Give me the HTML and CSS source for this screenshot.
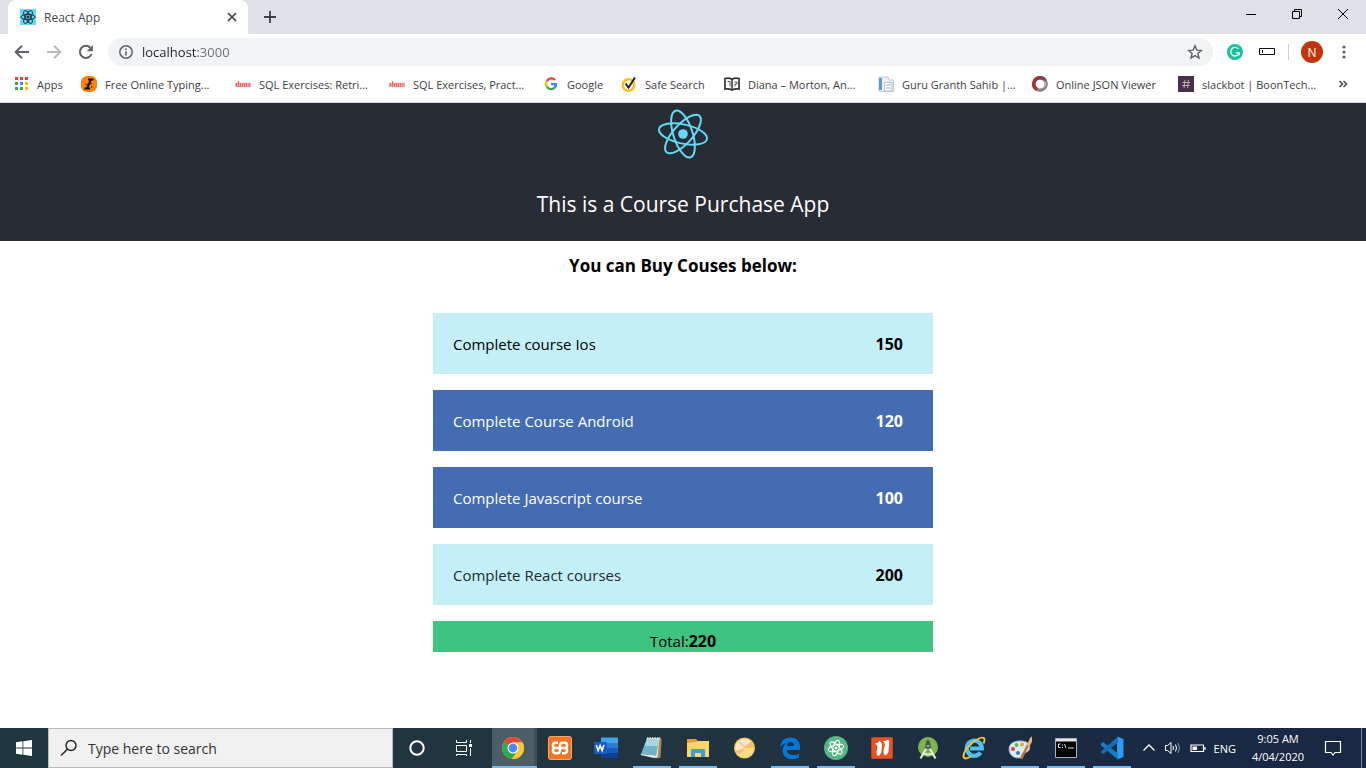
FILE: index.html
```html
<!DOCTYPE html>
<html lang="en">
<head>
<meta charset="utf-8">
<title>React App</title>
<link rel="stylesheet" href="styles.css">
</head>
<body>
<div class="screen">
  <div class="tab-strip">
    <div class="tab">
      <svg class="icon16" viewBox="0 0 16 16"><rect width="16" height="16" fill="#61dafb"/><g fill="none" stroke="#20303a" stroke-width="1"><ellipse cx="8" cy="8" rx="7" ry="2.7"/><ellipse cx="8" cy="8" rx="7" ry="2.7" transform="rotate(60 8 8)"/><ellipse cx="8" cy="8" rx="7" ry="2.7" transform="rotate(120 8 8)"/></g><circle cx="8" cy="8" r="1.5" fill="#20303a"/></svg>
      <span class="tab-title">React App</span>
      <button class="plain" aria-label="Close tab"><svg width="16" height="16" viewBox="0 0 16 16"><path d="M4 4l8 8M12 4l-8 8" stroke="#3c4043" stroke-width="1.700"/></svg></button>
    </div>
    <button class="plain new-tab" aria-label="New tab"><svg width="16" height="16" viewBox="0 0 16 16"><path d="M8 2v12M2 8h12" stroke="#3c4043" stroke-width="1.800"/></svg></button>
    <div class="window-buttons">
      <button class="plain" aria-label="Minimise"><svg width="12" height="12" viewBox="0 0 12 12"><path d="M1 6.500h10" stroke="#000"/></svg></button>
      <button class="plain" aria-label="Restore"><svg width="12" height="12" viewBox="0 0 12 12"><path d="M1.500 3.500h7v7h-7zM3.500 3.500v-2h7v7h-2" fill="none" stroke="#000"/></svg></button>
      <button class="plain" aria-label="Close"><svg width="12" height="12" viewBox="0 0 12 12"><path d="M1 1l10 10M11 1L1 11" stroke="#000"/></svg></button>
    </div>
  </div>

  <div class="toolbar">
    <button class="plain" aria-label="Back"><svg class="icon16" viewBox="0 0 16 16"><path d="M15 8H2M8 1.700L1.700 8 8 14.300" fill="none" stroke="#5f6368" stroke-width="2"/></svg></button>
    <button class="plain" aria-label="Forward"><svg class="icon16" viewBox="0 0 16 16"><path d="M1 8h13M8 1.700L14.300 8 8 14.300" fill="none" stroke="#babcbe" stroke-width="2"/></svg></button>
    <button class="plain" aria-label="Reload"><svg class="icon16" viewBox="0 0 16 16"><path d="M13.500 10A6 6 0 1 1 12.300 3.800" fill="none" stroke="#5f6368" stroke-width="2"/><path d="M14.900 1v6.200H8.700z" fill="#5f6368"/></svg></button>
    <div class="address">
      <svg class="icon16" viewBox="0 0 16 16"><circle cx="8" cy="8" r="6.200" fill="none" stroke="#5f6368" stroke-width="1.500"/><path d="M8 7.200v4.200M8 4.400v1.600" stroke="#5f6368" stroke-width="1.600"/></svg>
      <input class="url" type="text" aria-label="Address" value="localhost:3000">
      <button class="plain" aria-label="Bookmark this page"><svg class="icon16" viewBox="0 0 16 16"><path d="M8 1.900l1.800 4.200 4.600.4-3.500 3 1.100 4.500-4-2.400-4 2.400 1.100-4.500-3.500-3 4.600-.4z" fill="none" stroke="#5f6368" stroke-width="1.400"/></svg></button>
    </div>
    <button class="plain" aria-label="Grammarly"><svg class="icon16" viewBox="0 0 16 16"><circle cx="8" cy="8" r="8" fill="#15c39a"/><path d="M11.300 4.900A4.300 4.300 0 1 0 12.200 8.800H8.800M12.200 8.500v2.700" fill="none" stroke="#fff" stroke-width="1.300"/></svg></button>
    <button class="plain" aria-label="Extension"><svg class="icon16" viewBox="0 0 16 16"><path d="M.5 4.500h15v6H.5zM3.500 6v3" fill="none" stroke="#111"/></svg></button>
    <span class="divider"></span>
    <button class="plain avatar">N</button>
    <button class="plain" aria-label="Menu"><svg class="icon16" viewBox="0 0 16 16" fill="#5f6368"><circle cx="8" cy="3" r="1.600"/><circle cx="8" cy="8" r="1.600"/><circle cx="8" cy="13" r="1.600"/></svg></button>
  </div>

  <nav class="bookmarks" aria-label="Bookmarks">
    <a href="#"><svg class="icon16" viewBox="0 0 16 16"><path fill="#ea4335" d="M2 1h3v3H2zM7 1h3v3H7zM12 1h3v3h-3z"/><path fill="#34a853" d="M2 6h3v3H2zM2 11h3v3H2z"/><path fill="#4285f4" d="M7 6h3v3H7z"/><path fill="#34a853" d="M7 11h3v3H7z"/><path fill="#fbbc05" d="M12 6h3v3h-3zM12 11h3v3h-3z"/></svg>Apps</a>
    <a href="#"><svg class="icon16" viewBox="0 0 16 16"><rect width="16" height="16" rx="6" fill="#f9820f"/><path d="M7 3.500h5.500M3.500 12.500H9M10 3.500l-4 9" stroke="#111" stroke-width="1.900"/><path d="M4.500 8.500l6.500-1M11 10l-1 2" stroke="#111" stroke-width=".8"/></svg>Free Online Typing...</a>
    <a href="#"><svg class="icon16" viewBox="0 0 16 16"><path d="M0 9h16" stroke="#f7b0b2" stroke-width="4.500"/><path d="M1.500 7v3.500M3.500 5v6M5.500 7v4M7.500 7v4M9.500 7v4M11.500 7v4M14 7v4" stroke="#ee6066"/></svg>SQL Exercises: Retri...</a>
    <a href="#"><svg class="icon16" viewBox="0 0 16 16"><path d="M0 9h16" stroke="#f7b0b2" stroke-width="4.500"/><path d="M1.500 7v3.500M3.500 5v6M5.500 7v4M7.500 7v4M9.500 7v4M11.500 7v4M14 7v4" stroke="#ee6066"/></svg>SQL Exercises, Pract...</a>
    <a href="#"><svg class="icon16" viewBox="0 0 16 16" fill="none" stroke-width="2.300"><path d="M12.100 4A5 5 0 0 0 3.800 5.300" stroke="#ea4335"/><path d="M3.800 5.300a5 5 0 0 0 0 5.400" stroke="#fbbc05"/><path d="M3.800 10.700a5 5 0 0 0 7.600 1.200" stroke="#34a853"/><path d="M11.400 11.900A5 5 0 0 0 13 8.200H8" stroke="#4285f4"/></svg>Google</a>
    <a href="#"><svg class="icon16" viewBox="0 0 16 16"><circle cx="7.500" cy="9" r="5.700" fill="#fff" stroke="#fdc010" stroke-width="2.500"/><path d="M4.500 7.500l3 4L14 1.500" fill="none" stroke="#222" stroke-width="2"/></svg>Safe Search</a>
    <a href="#"><svg class="icon16" viewBox="0 0 16 16"><path d="M1 2.500q4-1 7 .8 3-1.800 7-.8V13q-4-.7-7 1-3-1.700-7-1z" fill="#fff" stroke="#333" stroke-width="1.700"/><path d="M8 3.500v10" stroke="#333" stroke-width="1.500"/><path d="M3.500 5.500H6v5M10.500 6H13v2h-2v2.500" fill="none" stroke="#555"/></svg>Diana – Morton, An...</a>
    <a href="#"><svg class="icon16" viewBox="0 0 16 16"><path d="M1 1h9l1 3h4.500v11.500H1z" fill="#eef1f4" stroke="#c3c9d1"/><path d="M1 2h3v12H1z" fill="#5c9ccc"/><path d="M6.500 6.500H14V15H6.500z" fill="#fff" stroke="#b7bec8"/><path d="M8 9h5M8 12h5" stroke="#a8b2bf"/></svg>Guru Granth Sahib |...</a>
    <a href="#"><svg class="icon16" viewBox="0 0 16 16" fill="none" stroke-width="3.400"><circle cx="8" cy="8" r="6.200" stroke="#8d8788"/><path d="M5 13.400A6.200 6.200 0 0 1 8 1.800" stroke="#b02a36"/><path d="M8 1.800a6.200 6.200 0 0 1 5.400 3.200" stroke="#74484c"/><path d="M11.500 4a5 5 0 0 1 0 8" stroke="#c6c2c2" stroke-width="1"/></svg>Online JSON Viewer</a>
    <a href="#"><svg class="icon16" viewBox="0 0 16 16"><rect width="16" height="16" fill="#4a2f48"/><path d="M7 4L6 12M10.500 4l-1 8M4.500 6.500h7.500M4 9.500h7.500" stroke="#b9aab8"/></svg>slackbot | BoonTech...</a>
    <button class="plain" aria-label="More bookmarks"><svg width="10" height="10" viewBox="0 0 10 10"><path d="M1.500 2l3 3-3 3M5.500 2l3 3-3 3" fill="none" stroke="#4a4d51" stroke-width="1.600"/></svg></button>
  </nav>

  <header class="app-header">
    <svg class="app-logo" viewBox="0 0 52 52"><g fill="none" stroke="#61dafb" stroke-width="2"><ellipse cx="26" cy="26" rx="24.500" ry="9.600" transform="rotate(12 26 26)"/><ellipse cx="26" cy="26" rx="24.500" ry="9.600" transform="rotate(72 26 26)"/><ellipse cx="26" cy="26" rx="24.500" ry="9.600" transform="rotate(132 26 26)"/></g><circle cx="26" cy="26" r="4.800" fill="#61dafb"/></svg>
    <h1>This is a Course Purchase App</h1>
  </header>

  <main class="app-main">
    <h2>You can Buy Couses below:</h2>
    <ul class="courses">
      <li class="course"><span>Complete course Ios</span><b>150</b></li>
      <li class="course selected"><span>Complete Course Android</span><b>120</b></li>
      <li class="course selected"><span>Complete Javascript course</span><b>100</b></li>
      <li class="course faded"><span>Complete React courses</span><b>200</b></li>
    </ul>
    <p class="total">Total:<b>220</b></p>
  </main>

  <footer class="taskbar">
    <button class="plain start" aria-label="Start"><svg width="16" height="16" viewBox="0 0 16 16"><path fill="#fff" d="M0 2.200l6.500-.9v6.200H0zM7.300 1.200L16 0v7.500H7.300zM0 8.400h6.500v6.300L0 13.800zM7.300 8.400H16V16l-8.700-1.200z"/></svg></button>
    <label class="search"><svg width="18" height="18" viewBox="0 0 18 18"><circle cx="11" cy="6.500" r="5" fill="none" stroke="#222" stroke-width="1.400"/><path d="M7.400 10.200L1 16.500" stroke="#222" stroke-width="1.500"/></svg><input type="text" aria-label="Search" placeholder="Type here to search"></label>
    <button class="plain task" aria-label="Cortana"><svg width="18" height="18" viewBox="0 0 18 18"><circle cx="9" cy="9" r="6.700" fill="none" stroke="#fff" stroke-width="2"/></svg></button>
    <button class="plain task" aria-label="Task view"><svg width="18" height="18" viewBox="0 0 18 18"><path d="M2.500 1v2.500h10V1M2.500 6.500h10v6h-10zM2.500 17v-1.500h10V17M16.500 1v3M16.500 9v8" fill="none" stroke="#fff"/><path d="M15 5h3v3h-3z" fill="#fff"/></svg></button>
    <button class="plain task running active" aria-label="Chrome"><svg class="icon24" viewBox="0 0 24 24"><circle cx="12" cy="12" r="11" fill="#fcc934"/><path d="M12 12L2.500 6.500A11 11 0 0 1 21.500 6.500H12z" fill="#dd4b3e"/><path d="M12 12L2.500 6.500A11 11 0 0 0 11 23l6-8.500z" fill="#2da94f"/><path d="M12 6.500h9.500A11 11 0 0 1 11 23l5.800-8.500z" fill="#fcc934"/><circle cx="12" cy="12" r="5.500" fill="#fff"/><circle cx="12" cy="12" r="4.400" fill="#4a8af4"/></svg></button>
    <button class="plain task" aria-label="XAMPP"><svg class="icon24" viewBox="0 0 24 24"><rect x=".5" y=".5" width="23" height="23" rx="2" fill="#ef7622" stroke="#f6a66e"/><path d="M10 6.800H7.500a2.600 2.600 0 0 0 0 5.200 2.600 2.600 0 0 0 0 5.200H9q3 0 3-3V9.800q0-3 3-3h1.500a2.600 2.600 0 0 1 0 5.200 2.600 2.600 0 0 1 0 5.200H14M7.500 12h9" fill="none" stroke="#fff" stroke-width="2.400"/></svg></button>
    <button class="plain task" aria-label="Word"><svg class="icon24" viewBox="0 0 24 24"><path d="M7 1.500h17v5.500H7z" fill="#41a5ee"/><path d="M7 7h17v5H7z" fill="#2b7cd3"/><path d="M7 12h17v5H7z" fill="#185abd"/><path d="M7 17h17v5H7z" fill="#103f91"/><path d="M0 6h12.500v12H0z" fill="#185abd"/><path d="M2.300 9l1.800 5.500 2-5 2 5L9.900 9" fill="none" stroke="#fff" stroke-width="1.500"/></svg></button>
    <button class="plain task running" aria-label="Notepad"><svg class="icon24" viewBox="0 0 24 24"><path d="M18 1.500l3.500 2-1 18-4 1z" fill="#b58b4b"/><path d="M7 2h13L16 19.500 1 18z" fill="#6fb3c6"/><path d="M7 2h13l-2 8-13 0z" fill="#a9d6e0"/><path d="M1 18l15 1.500 3-14-1.500 16L14 22 .5 19z" fill="#dcecf0"/><path d="M7 2h13.500" stroke="#ece6d8" stroke-width="1.500" stroke-dasharray="1.500 1"/></svg></button>
    <button class="plain task running" aria-label="File Explorer"><svg class="icon24" viewBox="0 0 24 24"><path d="M1 3h9l2 2h11v15H1z" fill="#e3a21a"/><path d="M1 7l9-1 2-1h11v16H1z" fill="#fbd66e"/><path d="M5 21v-7q0-1 1-1h12q1 0 1 1v7h-4v-4H9v4z" fill="#3f9ade"/></svg></button>
    <button class="plain task" aria-label="Gold disc"><svg class="icon24" viewBox="0 0 24 24"><circle cx="12.500" cy="12" r="10.500" fill="#f3c25a"/><path d="M4 8q6-8 15-3l-6 7-10 3z" fill="#fae9c4"/><path d="M5 18l8-6 9 0q-1 8-8 9.500-6 .5-9-3.500z" fill="#f8dc86"/><path d="M7 6l6 5 5-3M12 13l-5 5" stroke="#f3bd98" stroke-width="1.500" fill="none"/></svg></button>
    <button class="plain task running" aria-label="Edge"><svg class="icon24" viewBox="0 0 24 24"><path d="M2 11C3 4.500 7 1.500 12.500 1.500c6.500 0 9.500 4.500 9.500 9.500v3H9c0 3.500 3 5 6 5 2.500 0 4.500-.7 6-1.600v4.200c-2 1.100-4.500 1.600-7 1.600-5.500 0-9.500-3.500-9.500-8.700 0-3.500 1.800-6 4.500-7.500-3 .5-5 1.700-7 4zM9.200 10H16c0-2.500-1.200-4-3.300-4S9.400 7.500 9.200 10z" fill="#0078d7"/></svg></button>
    <button class="plain task running" aria-label="Atom"><svg class="icon24" viewBox="0 0 24 24"><circle cx="12" cy="12" r="12" fill="#56b783"/><g fill="none" stroke="#fff"><ellipse cx="12" cy="12" rx="8" ry="3" transform="rotate(-15 12 12)"/><ellipse cx="12" cy="12" rx="8" ry="3" transform="rotate(45 12 12)"/><ellipse cx="12" cy="12" rx="8" ry="3" transform="rotate(105 12 12)"/></g><circle cx="12" cy="12" r="1.200" fill="#fff"/></svg></button>
    <button class="plain task" aria-label="Nitro PDF"><svg class="icon24" viewBox="0 0 24 24"><rect x="1.500" y="1.500" width="21" height="21" rx="1" fill="#e65320" stroke="#b9481f"/><path d="M5 7.500Q8 7 9.500 5q2.500 1 2.500 4l-.5 6q-.5 4-3.500 5-1.500-1-1.500-3.500L7.500 10z" fill="#fff"/><path d="M13 5q3 0 5-1.500 1.500 1 1.200 4L18.500 15q-.5 3.500-3.500 4.500-2-1.500-1.500-4.500L15 8.500z" fill="#fff"/></svg></button>
    <button class="plain task" aria-label="Android Studio"><svg class="icon24" viewBox="0 0 24 24"><circle cx="12" cy="11" r="10" fill="#7db648"/><path d="M10.500 12L4.500 22.500M13.500 12l6 10.500M7.500 17q4.500 3 9 0" fill="none" stroke="#e9eeea" stroke-width="2"/><path d="M12 3.500l2 2v4l1.500 3h-7L10 9.500v-4z" fill="#475a5f"/><circle cx="12" cy="10" r="2.600" fill="#475a5f"/><circle cx="12" cy="10" r="1.100" fill="#a5cf81"/></svg></button>
    <button class="plain task" aria-label="Internet Explorer"><svg class="icon24" viewBox="0 0 24 24"><path d="M18.500 16.500A7.500 7.500 0 1 1 19.800 12.500H8" fill="none" stroke="#52bff0" stroke-width="4.200"/><path d="M21.500 7.500C24 2 21.500 0 16 3M16 3C8 7 1 16 1.500 20.500 2 24 6.500 22 9 20.300" fill="none" stroke="#f4c431" stroke-width="1.900"/></svg></button>
    <button class="plain task running" aria-label="Paint"><svg class="icon24" viewBox="0 0 24 24"><path d="M1 13C1 7 7 4.500 14 5s9 5 7 9-6 1-7 4 0 4-4 4-9-3-9-9z" fill="#dcecf7" stroke="#8faec5"/><circle cx="5" cy="13" r="2" fill="#d9432f"/><circle cx="8.500" cy="9" r="2" fill="#63b84b"/><circle cx="14" cy="8.500" r="2" fill="#f0a431"/><circle cx="10" cy="17" r="2" fill="#3a77ca"/><path d="M13 23l7-14" stroke="#c7742b" stroke-width="2.500"/><path d="M19 9l2-5q2-4 3-3.500v5.500l-3 5z" fill="#e2b279"/></svg></button>
    <button class="plain task running" aria-label="Command Prompt"><svg class="icon24" viewBox="0 0 24 24"><path d="M1.500 2.500h21v19h-21z" fill="#050505" stroke="#aeb3b8"/><path d="M2 3h20v2.500H2z" fill="#e5e5e5"/><path d="M6.500 8h-2v3.500h2M8.500 8.500v1M8.500 11v1M10.500 8l1.500 4M14 12h6" fill="none" stroke="#ddd"/></svg></button>
    <button class="plain task running" aria-label="Visual Studio Code"><svg class="icon24" viewBox="0 0 24 24"><path d="M17 .5L23.500 3v18L17 23.500z" fill="#2a9df0"/><path d="M1 8l2-2 15 11.500v6L1 9.500z" fill="#1580ca"/><path d="M1 15.500L18 .5v6L3 18l-2-1.500z" fill="#1c6db8"/></svg></button>
    <div class="tray">
      <div class="tray-icons">
        <button class="plain" aria-label="Show hidden icons"><svg width="14" height="14" viewBox="0 0 14 14"><path d="M1.500 9.500L7 4l5.500 5.500" fill="none" stroke="#fff" stroke-width="1.300"/></svg></button>
        <button class="plain" aria-label="Volume"><svg width="18" height="16" viewBox="0 0 18 16" fill="none" stroke="#fff"><path d="M1.500 5.500h2l3.500-3v11l-3.500-3h-2z"/><path d="M9 6q1 2 0 4M11.500 4.500q2 3.500 0 7"/><path d="M14 3q3 5 0 10" stroke="#8993a1"/></svg></button>
        <button class="plain" aria-label="Battery"><svg width="16" height="16" viewBox="0 0 16 16"><path d="M1 5h12.500v6.500H1zM15 7v3" fill="none" stroke="#fff" stroke-width="1.200"/><path d="M2.500 6.500H7V10H2.500z" fill="#fff"/></svg></button>
        <span>ENG</span>
      </div>
      <time class="clock" datetime="2020-04-04T09:05">9:05 AM<br>4/04/2020</time>
      <button class="plain notify" aria-label="Notifications"><svg width="18" height="18" viewBox="0 0 18 18"><path d="M1.500 2.500h15v11H11l-2 2.500-2-2.500H1.500z" fill="none" stroke="#fff" stroke-width="1.200"/></svg></button>
    </div>
  </footer>
</div>
</body>
</html>
```

FILE: styles.css
```css
* { box-sizing: border-box; }

body {
  margin: 0;
  background: #fff;
  color: #000;
  font-family: "Open Sans", "Noto Sans", sans-serif;
}

.screen {
  display: flex;
  flex-direction: column;
  min-height: 100vh;
}

svg { display: block; flex: none; }
.icon16 { width: 16px; height: 16px; }
.icon24 { width: 24px; height: 24px; }

.plain {
  display: flex;
  align-items: center;
  justify-content: center;
  padding: 0;
  border: 0;
  background: none;
  color: inherit;
  font: inherit;
}

/* Browser chrome */
.tab-strip {
  display: flex;
  height: 34px;
  padding-left: 8px;
  background: #dee1e6;
  font-size: 12px;
}

.tab {
  display: flex;
  align-items: center;
  gap: 8px;
  width: 240px;
  padding: 0 8px 0 12px;
  border-radius: 8px 8px 0 0;
  background: #fff;
  color: #45494d;
}

.tab-title { flex: 1; }
.new-tab { margin-left: 14px; }

.window-buttons {
  display: flex;
  margin-left: auto;
}

.window-buttons .plain { width: 46px; height: 28px; }

.toolbar {
  display: flex;
  align-items: center;
  gap: 16px;
  height: 36px;
  padding: 0 14px;
}

.address {
  display: flex;
  flex: 1;
  align-items: center;
  gap: 8px;
  height: 28px;
  margin: 0 -2px;
  padding: 0 10px;
  border-radius: 14px;
  background: #f1f3f4;
}

.url {
  flex: 1;
  min-width: 0;
  padding: 0;
  border: 0;
  outline: 0;
  background: linear-gradient(90deg, #202124 56px, #6b6f74 56px);
  background-clip: text;
  -webkit-background-clip: text;
  color: #202124;
  -webkit-text-fill-color: transparent;
  font: 13px "Open Sans", sans-serif;
}

.divider {
  width: 1px;
  height: 16px;
  margin: 0 -4px 0 -3px;
  background: #cfd1d4;
}

.avatar {
  width: 22px;
  height: 22px;
  margin-right: -3px;
  border-radius: 50%;
  background: #bf360c;
  color: #fff;
  font-size: 12px;
}

.bookmarks {
  display: grid;
  grid-template-columns: 68px 154px 154px 154px 78px 103px 154px 154px 146px 1fr 20px;
  align-items: center;
  height: 33px;
  padding: 0 13px 4px;
  border-bottom: 1px solid #d5d7da;
  color: #3c4043;
  font-size: 11px;
}

.bookmarks a {
  display: flex;
  align-items: center;
  gap: 8px;
  color: inherit;
  text-decoration: none;
  white-space: nowrap;
}

/* Course app */
.app-header {
  display: flex;
  flex-direction: column;
  align-items: center;
  padding: 5px 16px 20px;
  background: #282c34;
  color: #fff;
}

.app-logo { width: 52px; height: 52px; }

.app-header h1 {
  margin: 28px 0 0;
  font-size: 21px;
  font-weight: 400;
  line-height: 33px;
}

.app-main {
  flex: 1;
  width: 100%;
  max-width: 500px;
  margin: 0 auto;
}

.app-main h2 {
  margin: 12px 0 35px;
  font-size: 17px;
  font-weight: 700;
  line-height: 25px;
  text-align: center;
}

.courses {
  display: grid;
  gap: 16px;
  margin: 0;
  padding: 0;
  list-style: none;
}

.course {
  display: flex;
  justify-content: space-between;
  padding: 21px 30px 19px 20px;
  background: #c5eff7;
  font-size: 15px;
  line-height: 21px;
}

.course b,
.total b {
  font-size: 16px;
  font-weight: 700;
}

.course.selected {
  background: #446cb3;
  color: #fff;
}

.course.selected span { font-weight: 500; }
.course.faded span { color: #222b2d; }

.total {
  margin: 16px 0 0;
  padding-top: 10px;
  background: #3fc380;
  font-size: 15px;
  line-height: 21px;
  text-align: center;
}

/* Windows taskbar */
.taskbar {
  display: flex;
  height: 40px;
  background: linear-gradient(90deg, #203740, #22343f 50%, #1b2b42 75%, #192743);
  color: #fff;
  font-size: 11px;
}

.start { width: 48px; }

.search {
  display: flex;
  flex: 1;
  align-items: center;
  gap: 10px;
  margin-right: 1px;
  padding: 0 11px;
  border: 1px solid #bababa;
  background: #f1f1f1;
}

.search input {
  flex: 1;
  min-width: 0;
  padding: 0;
  border: 0;
  outline: 0;
  background: none;
  font: 14px "Open Sans", sans-serif;
}

.search input::placeholder { color: #333; }

.task {
  position: relative;
  width: 46px;
}

.task.running::after {
  position: absolute;
  right: 4px;
  bottom: 0;
  left: 4px;
  height: 2px;
  background: #76b9ed;
  content: "";
}

.task.active {
  width: 45px;
  margin-left: 6px;
  border-right: 3px solid #3d4e56;
  background: #4c5d65;
}

.task.active::after { right: -3px; left: 0; }

.tray {
  display: flex;
  align-items: center;
  margin-right: 4px;
  padding: 0 15px 0 7px;
  border-right: 1px solid #7b8694;
}

.tray-icons {
  display: flex;
  align-items: center;
  gap: 8px;
}

.clock {
  width: 84px;
  line-height: 18px;
  text-align: center;
}

.notify { width: 26px; }
```
